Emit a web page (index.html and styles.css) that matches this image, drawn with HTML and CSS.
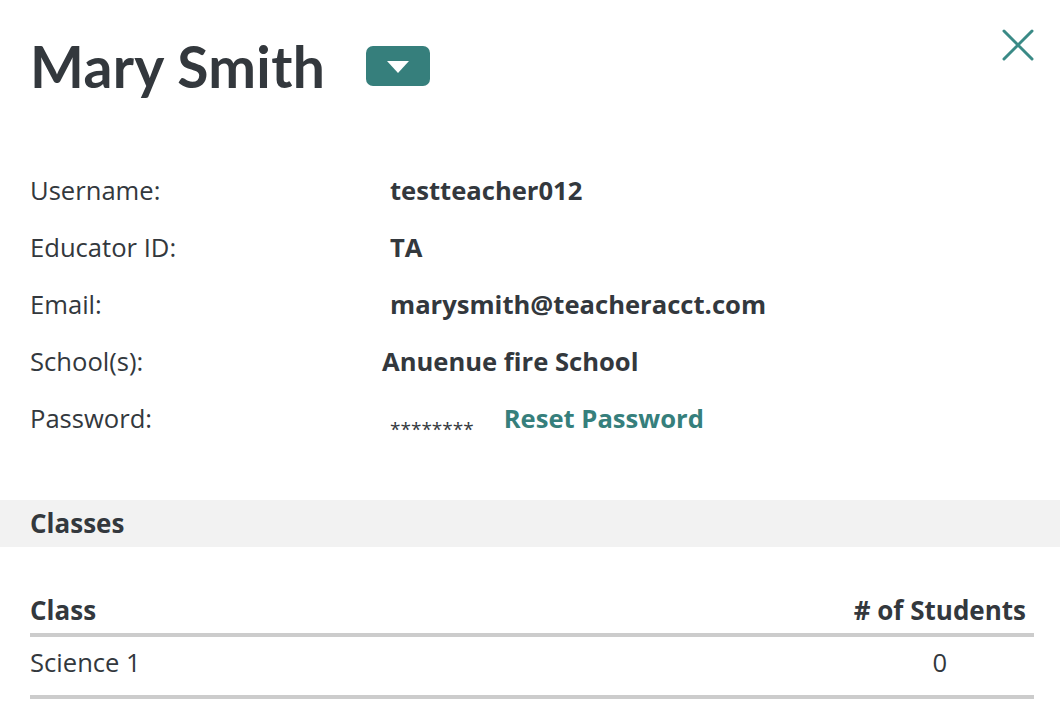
FILE: index.html
```html
<!DOCTYPE html>
<html>
<head>
<meta charset="utf-8">
<link rel="stylesheet" href="styles.css">
</head>
<body>
<div class="panel">
  <header class="head">
    <h1 class="name">Mary Smith</h1>
    <button class="menu-btn" aria-label="More"><svg width="24" height="14" viewBox="0 0 24 14"><polygon points="1,1 23,1 12,13" fill="#fff"/></svg></button>
    <button class="close-btn" aria-label="Close"><svg width="32" height="32" viewBox="0 0 32 32"><path d="M2 2 L30 30 M30 2 L2 30" stroke="#3a8a86" stroke-width="3" stroke-linecap="round"/></svg></button>
  </header>
  <section class="info">
    <div class="row"><span class="label">Username:</span><span class="value">testteacher012</span></div>
    <div class="row"><span class="label">Educator ID:</span><span class="value">TA</span></div>
    <div class="row"><span class="label">Email:</span><span class="value">marysmith@teacheracct.com</span></div>
    <div class="row"><span class="label">School(s):</span><span class="value school">Anuenue fire School</span></div>
    <div class="row"><span class="label">Password:</span><span class="value pw"><span class="stars">********</span><a class="reset" href="#">Reset Password</a></span></div>
  </section>
  <div class="band">Classes</div>
  <table class="classes">
    <thead><tr><th class="c1">Class</th><th class="c2"># of Students</th></tr></thead>
    <tbody><tr><td class="c1">Science 1</td><td class="c2">0</td></tr></tbody>
  </table>
</div>
</body>
</html>
```
FILE: styles.css
```css
* { box-sizing: border-box; }
html, body { margin: 0; padding: 0; background: #fff; }
body { font-family: "Open Sans", Lato, sans-serif; color: #33383d; width: 1060px; height: 718px; overflow: hidden; }
.panel { position: relative; }
.head { display: flex; align-items: flex-start; padding: 26px 30px 0 30px; height: 108px; }
.name { margin: 0; font-family: Lato, "Open Sans", sans-serif; font-size: 57px; font-weight: 700; line-height: 80px; letter-spacing: 0.3px; }
.menu-btn { margin: 20px 0 0 41px; width: 64px; height: 40px; border: none; border-radius: 7px; background: #367f7c; display: flex; align-items: center; justify-content: center; padding: 0; padding-top: 2px; }
.close-btn { position: absolute; top: 29px; right: 26px; background: none; border: none; padding: 0; }
.info { padding: 54px 30px 0 30px; }
.row { display: flex; align-items: baseline; height: 57px; font-size: 25.6px; line-height: 57px; }
.label { width: 360px; flex: none; }
.value { font-weight: 700; }
.school { margin-left: -8px; }
.pw { display: flex; align-items: baseline; }
.stars { font-size: 19px; font-weight: 400; position: relative; top: 8px; }
.reset { color: #367f7c; text-decoration: none; margin-left: 30px; }
.band { margin-top: 53px; background: #f2f2f2; height: 47px; line-height: 47px; padding-left: 30px; font-size: 26px; font-weight: 700; }
.classes { margin: 40px 26px 0 30px; width: 1004px; border-collapse: collapse; font-size: 26px; }
.classes th { font-weight: 700; text-align: left; height: 48px; border-bottom: 4px solid #cccccc; padding: 0; vertical-align: middle; }
.classes td { height: 62px; border-bottom: 4px solid #cccccc; padding: 0 0 8px 0; font-size: 25.6px; }
.classes .c2 { text-align: center; width: 1px; white-space: nowrap; padding-right: 8px; }
```
